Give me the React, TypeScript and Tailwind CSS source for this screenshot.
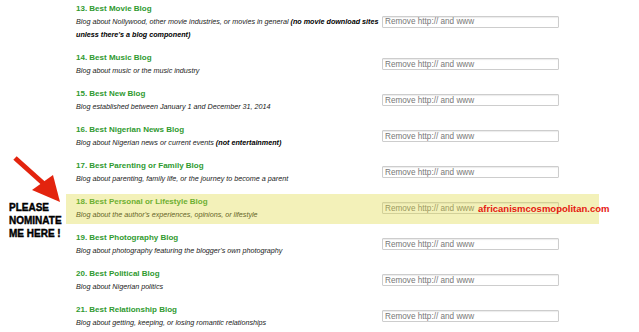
type Category = {
  title: string;
  desc: React.ReactNode;
  highlight?: boolean;
};

const categories: Category[] = [
  {
    title: "13. Best Movie Blog",
    desc: (
      <>
        Blog about Nollywood, other movie industries, or movies in general{" "}
        <b className="font-bold text-black">(no movie download sites</b>
        <br />
        <b className="font-bold text-black">unless there's a blog component)</b>
      </>
    ),
  },
  { title: "14. Best Music Blog", desc: "Blog about music or the music industry" },
  { title: "15. Best New Blog", desc: "Blog established between January 1 and December 31, 2014" },
  {
    title: "16. Best Nigerian News Blog",
    desc: (
      <>
        Blog about Nigerian news or current events{" "}
        <b className="font-bold text-black">(not entertainment)</b>
      </>
    ),
  },
  {
    title: "17. Best Parenting or Family Blog",
    desc: "Blog about parenting, family life, or the journey to become a parent",
  },
  {
    title: "18. Best Personal or Lifestyle Blog",
    desc: "Blog about the author's experiences, opinions, or lifestyle",
    highlight: true,
  },
  {
    title: "19. Best Photography Blog",
    desc: "Blog about photography featuring the blogger's own photography",
  },
  { title: "20. Best Political Blog", desc: "Blog about Nigerian politics" },
  {
    title: "21. Best Relationship Blog",
    desc: "Blog about getting, keeping, or losing romantic relationships",
  },
];

function Row({ c }: { c: Category }) {
  return (
    <div className="relative flex items-center pt-[1.5px] pb-[2.5px]">
      <div className="w-[316px] shrink-0 pl-[10px]">
        <div className="text-[8px] leading-[13px] font-bold text-[#2f9a2f]">{c.title}</div>
        <div className="text-[7.2px] leading-[13.5px] italic text-[#222]">{c.desc}</div>
      </div>
      <input
        readOnly
        placeholder="Remove http:// and www"
        className="w-[177px] h-[12px] border border-[#cdcdcd] rounded-[1px] bg-white px-[2px] py-0 text-[8.2px] leading-[10px] shadow-[inset_0_1px_1px_rgba(0,0,0,0.08)] outline-none placeholder:text-[#777]"
      />
      {c.highlight && (
        <>
          <div className="absolute inset-0 bg-[rgba(221,215,55,0.35)] pointer-events-none" />
          <span className="absolute left-[412px] top-[9px] text-[9.5px] leading-[11px] font-bold text-[#e5170f] whitespace-nowrap">
            africanismcosmopolitan.com
          </span>
        </>
      )}
    </div>
  );
}

export default function App() {
  return (
    <div className="w-[639px] h-[332px] overflow-hidden bg-white flex font-['Liberation_Sans',Arial,sans-serif]">
      <aside className="w-[66px] shrink-0 pt-[150px]">
        <svg width="66" height="51" viewBox="0 0 66 51" className="overflow-visible">
          <line x1="15" y1="8" x2="44" y2="34" stroke="#e3240e" strokeWidth="5" strokeLinecap="butt" />
          <polygon points="32,40 53,25 60,52" fill="#e3240e" />
        </svg>
        <div className="pl-[9px] text-[10px] leading-[13px] font-bold text-black [-webkit-text-stroke:0.4px_black]">
          PLEASE
          <br />
          NOMINATE
          <br />
          ME HERE !
        </div>
      </aside>
      <main className="w-[533px] flex flex-col gap-[5.5px]">
        {categories.map((c) => (
          <Row key={c.title} c={c} />
        ))}
      </main>
    </div>
  );
}
